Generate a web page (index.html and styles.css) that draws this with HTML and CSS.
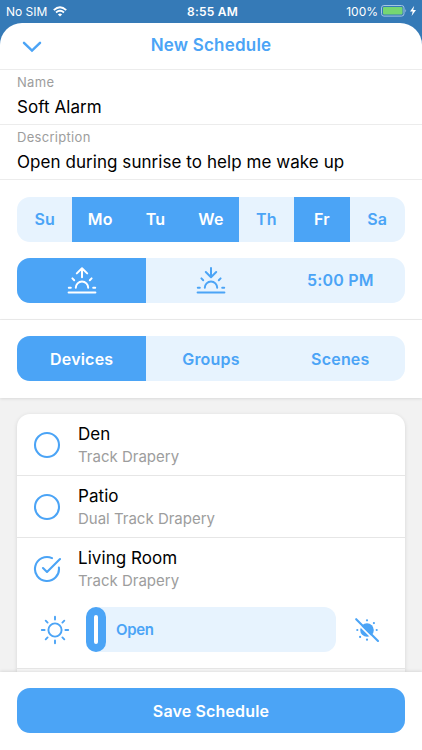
FILE: index.html
```html
<!DOCTYPE html>
<html lang="en">
<head>
    <meta charset="UTF-8">
    <meta name="viewport" content="width=device-width, initial-scale=1.0">
    <title>New Schedule</title>
    <link rel="stylesheet" href="styles.css">
</head>
<body>
    <div class="status-bar">
        <div class="carrier">
            <span>No SIM</span>
            <svg width="14" height="11" viewBox="0 0 14 11">
                <path d="M0.8 4.1 Q7 -1.5 13.2 4.1" fill="none" stroke="#fff" stroke-width="1.9"/>
                <path d="M3 6.5 Q7 3 11 6.5" fill="none" stroke="#fff" stroke-width="1.8"/>
                <path d="M4.9 8.4 Q7 6.7 9.1 8.4 L7 10.6 Z" fill="#fff"/>
            </svg>
        </div>
        <div class="clock">8:55 AM</div>
        <div class="power">
            <span>100%</span>
            <svg width="36" height="12" viewBox="0 0 36 12">
                <rect x="0.5" y="0.5" width="22.5" height="10.6" rx="2.4" fill="none" stroke="#a5c6e3"/>
                <rect x="2" y="2" width="19.5" height="7.6" rx="1" fill="#76d672"/>
                <path d="M24.4 4 Q26 5.8 24.4 7.6 Z" fill="#a5c6e3"/>
                <path d="M33.2 0.8 L29 6.6 H31.7 L30.6 11 L35 5 H32.2 Z" fill="#fff"/>
            </svg>
        </div>
    </div>

    <div class="sheet">
        <div class="header">
            <svg class="chevron" width="20" height="12" viewBox="0 0 20 12">
                <path d="M2 1.8 L10 9.6 L18 1.8" fill="none" stroke="#4ba4f6" stroke-width="2.5" stroke-linecap="round"/>
            </svg>
            <h1>New Schedule</h1>
        </div>

        <div class="field">
            <label>Name</label>
            <div class="value">Soft Alarm</div>
        </div>
        <div class="field">
            <label>Description</label>
            <div class="value">Open during sunrise to help me wake up</div>
        </div>

        <div class="timing">
            <div class="segments">
                <div class="segment">Su</div>
                <div class="segment active">Mo</div>
                <div class="segment active">Tu</div>
                <div class="segment active">We</div>
                <div class="segment">Th</div>
                <div class="segment active">Fr</div>
                <div class="segment">Sa</div>
            </div>
            <div class="segments">
                <div class="segment active">
                    <svg class="icon" width="30" height="28" viewBox="0 0 30 28">
                        <path d="M1.6 26.6 H28.4 M1.8 21.8 H3.8 M26.2 21.8 H28.2 M8.8 21.8 A6.2 6.2 0 0 1 21.2 21.8 M5.4 12.4 L7.2 14.2 M24.6 12.4 L22.8 14.2 M15 11.2 V2.6 M9.8 7.4 L15 2.2 L20.2 7.4"/>
                    </svg>
                </div>
                <div class="segment">
                    <svg class="icon" width="30" height="28" viewBox="0 0 30 28">
                        <path d="M1.6 26.6 H28.4 M1.8 21.8 H3.8 M26.2 21.8 H28.2 M8.8 21.8 A6.2 6.2 0 0 1 21.2 21.8 M5.4 12.4 L7.2 14.2 M24.6 12.4 L22.8 14.2 M15 2 V10.8 M9.8 6 L15 11.2 L20.2 6"/>
                    </svg>
                </div>
                <div class="segment">5:00 PM</div>
            </div>
        </div>

        <div class="tabs">
            <div class="segments">
                <div class="segment active">Devices</div>
                <div class="segment">Groups</div>
                <div class="segment">Scenes</div>
            </div>
        </div>

        <div class="list">
            <div class="card">
                <div class="device">
                    <svg class="check" width="28" height="28" viewBox="0 0 28 28">
                        <circle cx="14" cy="14" r="12"/>
                    </svg>
                    <div>
                        <div class="name">Den</div>
                        <div class="type">Track Drapery</div>
                    </div>
                </div>
                <div class="device">
                    <svg class="check" width="28" height="28" viewBox="0 0 28 28">
                        <circle cx="14" cy="14" r="12"/>
                    </svg>
                    <div>
                        <div class="name">Patio</div>
                        <div class="type">Dual Track Drapery</div>
                    </div>
                </div>
                <div class="device selected">
                    <svg class="check" width="28" height="28" viewBox="0 0 28 28">
                        <path d="M19 3.1 A12 12 0 1 0 25.9 12.6 M10 13 L14 17 L27 4"/>
                    </svg>
                    <div>
                        <div class="name">Living Room</div>
                        <div class="type">Track Drapery</div>
                    </div>
                </div>
                <div class="position">
                    <svg width="30" height="30" viewBox="0 0 30 30">
                        <g fill="none" stroke="#4ba4f6" stroke-width="1.9" stroke-linecap="round">
                            <circle cx="15" cy="15" r="6.6"/>
                            <path d="M15 1.8 V4.6 M15 25.4 V28.2 M1.8 15 H4.6 M25.4 15 H28.2 M5.7 5.7 L7.6 7.6 M22.4 22.4 L24.3 24.3 M5.7 24.3 L7.6 22.4 M22.4 7.6 L24.3 5.7"/>
                        </g>
                    </svg>
                    <div class="slider">
                        <div class="handle"></div>
                        <span>Open</span>
                    </div>
                    <svg width="26" height="26" viewBox="0 0 26 26">
                        <g fill="#4ba4f6">
                            <circle cx="13" cy="13" r="6.8"/>
                            <circle cx="13" cy="3.3" r="1.1"/>
                            <circle cx="13" cy="22.7" r="1.1"/>
                            <circle cx="3.3" cy="13" r="1.1"/>
                            <circle cx="22.7" cy="13" r="1.1"/>
                            <circle cx="19.9" cy="6.1" r="1.1"/>
                            <circle cx="6.1" cy="19.9" r="1.1"/>
                        </g>
                        <path d="M1 3.8 L22.5 25.3" stroke="#fff" stroke-width="1.7"/>
                        <path d="M2.2 2.2 L24 24" stroke="#4ba4f6" stroke-width="2.1" stroke-linecap="round"/>
                    </svg>
                </div>
                <div class="next"></div>
            </div>
        </div>

        <div class="footer">
            <button>Save Schedule</button>
        </div>
    </div>
</body>
</html>
```

FILE: styles.css
```css
* {
    box-sizing: border-box;
}

body {
    margin: 0;
    height: 750px;
    overflow: hidden;
    display: flex;
    flex-direction: column;
    background-color: #357ab7;
    font-family: Inter, "Liberation Sans", sans-serif;
    color: #000;
}

.status-bar {
    height: 23px;
    flex: none;
    display: grid;
    grid-template-columns: 1fr auto 1fr;
    align-items: center;
    padding: 0 5px 1px 6px;
    font-size: 12px;
    color: #fff;
}

.carrier, .power {
    display: flex;
    align-items: center;
    gap: 6px;
}

.power {
    justify-content: flex-end;
    gap: 3px;
}

.clock {
    font-weight: 600;
    letter-spacing: 0.2px;
    padding-left: 2px;
}

.sheet {
    flex: 1;
    min-height: 0;
    display: flex;
    flex-direction: column;
    background-color: #fff;
    border-radius: 22px 22px 0 0;
    overflow: hidden;
}

.header {
    height: 47px;
    flex: none;
    display: grid;
    grid-template-columns: 1fr auto 1fr;
    align-items: center;
    padding: 0 22px 3px;
    border-bottom: 1px solid #ececec;
}

.chevron {
    margin-top: 4px;
}

h1 {
    margin: 0;
    font-size: 17px;
    font-weight: 600;
    letter-spacing: 0.2px;
    color: #4ba4f6;
}

.field {
    height: 55px;
    flex: none;
    padding: 4px 17px 0;
    border-bottom: 1px solid #ececec;
}

.field label {
    display: block;
    font-size: 13px;
    line-height: 16px;
    letter-spacing: 0.3px;
    color: #9d9d9d;
}

.value {
    margin-top: 6px;
    font-size: 17px;
    line-height: 22px;
    letter-spacing: 0.06px;
}

.timing {
    flex: none;
    display: flex;
    flex-direction: column;
    gap: 16px;
    padding: 17px 17px 16px;
    border-bottom: 1px solid #ececec;
}

.segments {
    height: 45px;
    display: flex;
    border-radius: 13px;
    overflow: hidden;
    background-color: #e7f3fe;
}

.segment {
    flex: 1 1 0;
    display: flex;
    align-items: center;
    justify-content: center;
    padding-bottom: 1px;
    font-size: 16px;
    font-weight: 600;
    letter-spacing: 0.2px;
    color: #4ba4f6;
}

.active {
    background-color: #4ba4f6;
    color: #fff;
}

.icon {
    fill: none;
    stroke: currentColor;
    stroke-width: 2;
    stroke-linecap: round;
    stroke-linejoin: round;
}

.tabs {
    flex: none;
    padding: 16px 17px 17px;
    z-index: 1;
    background-color: #fff;
    box-shadow: 0 1px 3px rgba(0, 0, 0, 0.1);
}

.tabs .segment {
    padding-bottom: 0;
}

.list {
    flex: 1;
    min-height: 0;
    padding: 16px 17px 0;
    background-color: #f2f2f2;
}

.card {
    height: 100%;
    background-color: #fff;
    border-radius: 13px 13px 0 0;
    box-shadow: 0 1px 4px rgba(0, 0, 0, 0.12);
    overflow: hidden;
}

.device {
    height: 62px;
    display: flex;
    align-items: center;
    gap: 17px;
    padding-left: 16px;
    border-bottom: 1px solid #e6e6e6;
}

.selected {
    border-bottom: none;
}

.check {
    fill: none;
    stroke: #4ba4f6;
    stroke-width: 2.1;
    stroke-linecap: round;
    stroke-linejoin: round;
}

.name {
    font-size: 17px;
    line-height: 22px;
    letter-spacing: 0.06px;
}

.type {
    margin-top: 2px;
    font-size: 15px;
    line-height: 20px;
    color: #9d9d9d;
}

.position {
    height: 69px;
    display: flex;
    align-items: center;
    padding: 0 25px 9px 23px;
    border-bottom: 1px solid #e6e6e6;
}

.slider {
    flex: 1;
    height: 45px;
    margin: 0 18px 0 16px;
    display: flex;
    align-items: center;
    gap: 10px;
    border-radius: 12px;
    background-color: #e7f3fe;
    font-size: 15px;
    font-weight: 600;
    letter-spacing: -0.3px;
    color: #4ba4f6;
}

.handle {
    width: 20px;
    height: 45px;
    display: flex;
    align-items: center;
    justify-content: center;
    border-radius: 10px;
    background-color: #4ba4f6;
}

.handle::before {
    content: "";
    width: 4px;
    height: 29px;
    border-radius: 2px;
    background-color: #fff;
}

.next {
    height: 10px;
    background-color: #f8f8f8;
}

.footer {
    height: 78px;
    flex: none;
    padding: 16px 17px;
    z-index: 1;
    background-color: #fff;
    box-shadow: 0 -1px 3px rgba(0, 0, 0, 0.1);
}

button {
    width: 100%;
    height: 45px;
    border: none;
    border-radius: 13px;
    background-color: #4ba4f6;
    color: #fff;
    font-family: inherit;
    font-size: 16px;
    font-weight: 600;
    letter-spacing: 0.15px;
}
```
